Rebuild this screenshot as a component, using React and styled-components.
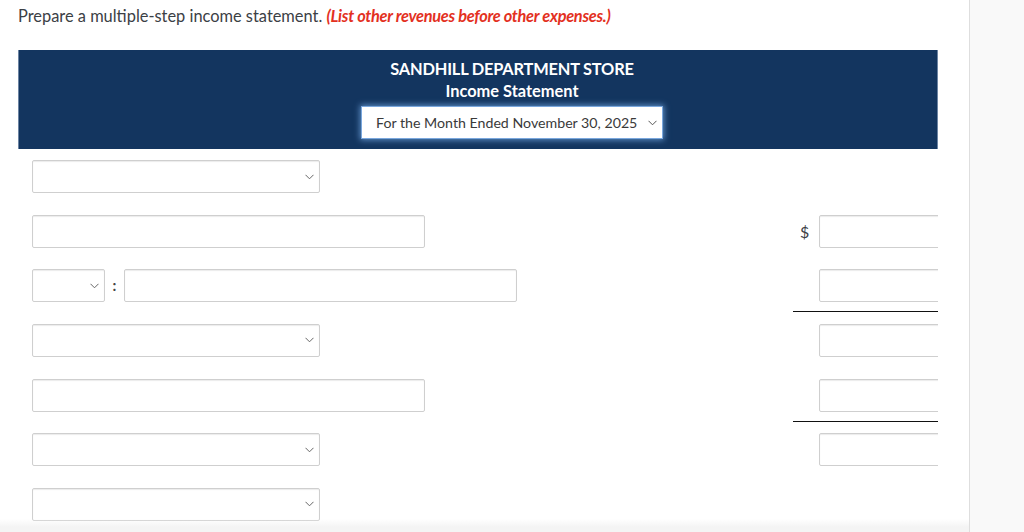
import React from "react";
import styled, { createGlobalStyle } from "styled-components";

const GlobalStyle = createGlobalStyle`
  html, body { margin: 0; padding: 0; background: #fff; }
  body { font-family: Lato, "Open Sans", Arial, sans-serif; color: #333; }
  * { box-sizing: border-box; }
`;

const Page = styled.div`
  display: flex;
  width: 1024px;
  height: 532px;
  overflow: hidden;
`;

const Main = styled.main`
  position: relative;
  width: 970px;
  flex: none;
  border-right: 1px solid #dedede;
  padding: 5px 0 0 18px;
  &::after {
    content: "";
    position: absolute;
    left: 0;
    right: 0;
    bottom: 0;
    height: 13px;
    background: linear-gradient(to bottom, rgba(246,246,246,0), #f4f4f4 60%);
  }
`;

const Side = styled.aside`
  flex: 1;
  background: #f9f9f9;
`;

const Instruction = styled.p`
  margin: 0;
  font-size: 16.4px;
  line-height: 22px;
  color: #3b4045;
`;

const Hint = styled.em`
  color: #e3311f;
  font-weight: 700;
  font-style: italic;
  letter-spacing: -0.3px;
`;

const Sheet = styled.section`
  margin-top: 23px;
  width: 920px;
  overflow: hidden;
`;

const Header = styled.header`
  background: #13355f;
  border-left: 1px solid #6c84a3;
  border-right: 1px solid #6c84a3;
  height: 99px;
  padding: 8px 0 0 68px;
  display: flex;
  flex-direction: column;
  align-items: center;
  color: #fff;
`;

const HeadLine = styled.div`
  font-size: 16.4px;
  font-weight: 700;
  line-height: 22px;
  letter-spacing: ${(p) => (p.$caps ? "-0.2px" : "0")};
`;

const DateSelect = styled.div`
  margin-top: 4px;
  width: 302px;
  height: 33px;
  background: #fff;
  border: 1px solid #7aa7dd;
  box-shadow: 0 0 6px 1px rgba(120, 175, 235, 0.75);
  display: flex;
  align-items: center;
  justify-content: space-between;
  padding: 0 5px 0 14px;
  font-size: 14.2px;
  color: #3a3a3a;
`;

const Rows = styled.div`
  padding-top: 11px;
  width: 1000px;
`;

const Row = styled.div`
  height: 54.67px;
  display: grid;
  grid-template-columns: 775px 26px 180px;
  align-items: start;
`;

const Left = styled.div`
  display: flex;
  align-items: center;
  padding-left: 14px;
`;

const boxBase = `
  height: 33px;
  background: #fff;
  border: 1px solid #cfcfcf;
  border-radius: 2px;
  box-shadow: inset 0 1px 1px rgba(0,0,0,0.08);
`;

const SelectBox = styled.div`
  ${boxBase}
  width: ${(p) => p.$w}px;
  display: flex;
  align-items: center;
  justify-content: flex-end;
  padding-right: 5px;
`;

const TextBox = styled.div`
  ${boxBase}
  width: ${(p) => p.$w}px;
`;

const Colon = styled.span`
  width: 19px;
  text-align: center;
  font-size: 15px;
  font-weight: 700;
  color: #444;
  line-height: 33px;
`;

const Dollar = styled.div`
  height: 43px;
  font-size: 16px;
  line-height: 33px;
  color: #3b4045;
  padding-left: 7px;
  border-bottom: ${(p) => (p.$rule ? "1px solid #111" : "1px solid transparent")};
`;

const AmountCell = styled.div`
  height: 43px;
  border-bottom: ${(p) => (p.$rule ? "1px solid #111" : "1px solid transparent")};
`;

const Amount = styled.div`
  ${boxBase}
  width: 180px;
`;

const Chevron = ({ color = "#666" }) => (
  <svg width="9" height="6" viewBox="0 0 9 6" fill="none">
    <polyline points="0.5,0.8 4.5,4.8 8.5,0.8" stroke={color} strokeWidth="1" />
  </svg>
);

const rows = [
  { left: "select", w: 288 },
  { left: "text", w: 393, dollar: true, amount: true },
  { left: "pair", amount: true, rule: true },
  { left: "select", w: 288, amount: true },
  { left: "text", w: 393, amount: true, rule: true },
  { left: "select", w: 288, amount: true },
  { left: "select", w: 288 },
];

export default function App() {
  return (
    <>
      <GlobalStyle />
      <Page>
        <Main>
          <Instruction>
            Prepare a multiple-step income statement.{" "}
            <Hint>(List other revenues before other expenses.)</Hint>
          </Instruction>
          <Sheet>
            <Header>
              <HeadLine $caps>SANDHILL DEPARTMENT STORE</HeadLine>
              <HeadLine>Income Statement</HeadLine>
              <DateSelect>
                <span>For the Month Ended November 30, 2025</span>
                <Chevron color="#555" />
              </DateSelect>
            </Header>
            <Rows>
              {rows.map((r, i) => (
                <Row key={i}>
                  <Left>
                    {r.left === "select" && (
                      <SelectBox $w={r.w}>
                        <Chevron />
                      </SelectBox>
                    )}
                    {r.left === "text" && <TextBox $w={r.w} />}
                    {r.left === "pair" && (
                      <>
                        <SelectBox $w={73}>
                          <Chevron />
                        </SelectBox>
                        <Colon>:</Colon>
                        <TextBox $w={393} />
                      </>
                    )}
                  </Left>
                  {r.amount ? (
                    <>
                      <Dollar $rule={r.rule}>{r.dollar ? "$" : ""}</Dollar>
                      <AmountCell $rule={r.rule}>
                        <Amount />
                      </AmountCell>
                    </>
                  ) : null}
                </Row>
              ))}
            </Rows>
          </Sheet>
        </Main>
        <Side />
      </Page>
    </>
  );
}
